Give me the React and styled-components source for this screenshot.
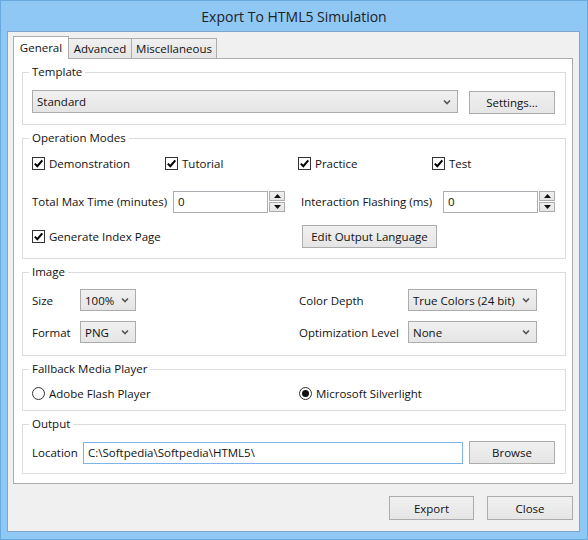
import React from 'react';
import styled, { createGlobalStyle } from 'styled-components';

const Global = createGlobalStyle`
  html, body { margin: 0; padding: 0; background: #8fc7f5; }
  * { box-sizing: border-box; }
`;

const FONT = `"Open Sans", "Liberation Sans", sans-serif`;

const Frame = styled.div`
  width: 588px;
  height: 540px;
  background: #8fc7f5;
  border: 1px solid #6aa9dd;
  display: flex;
  flex-direction: column;
  font-family: ${FONT};
  font-size: 11.5px;
  color: #111;
`;

const TitleBar = styled.div`
  height: 30px;
  display: flex;
  align-items: center;
  justify-content: center;
  font-size: 14px;
  color: #222;
`;

const Client = styled.div`
  margin: 0 7px 7px 6px;
  flex: 1;
  background: #f0f0f0;
  border: 1px solid #7fa5cc;
  padding: 4px 6px 0 5px;
  display: flex;
  flex-direction: column;
`;

const TabStrip = styled.div`
  display: flex;
  align-items: flex-end;
  height: 23px;
  margin-bottom: -1px;
  position: relative;
  z-index: 1;
`;

const Tab = styled.div`
  width: ${(p) => p.$w}px;
  height: ${(p) => (p.$active ? 23 : 21)}px;
  display: flex;
  align-items: center;
  justify-content: center;
  border: 1px solid #acacac;
  border-bottom: ${(p) => (p.$active ? 'none' : '1px solid #acacac')};
  border-left: ${(p) => (p.$first ? '1px solid #acacac' : 'none')};
  background: ${(p) => (p.$active ? '#fff' : 'linear-gradient(#f0f0f0, #e5e5e5)')};
  padding-bottom: ${(p) => (p.$active ? 2 : 0)}px;
`;

const Panel = styled.div`
  background: #fff;
  border: 1px solid #acacac;
  padding: 5px 6px 9px 8px;
  display: flex;
  flex-direction: column;
  gap: 5px;
`;

const Group = styled.fieldset`
  margin: 0;
  min-width: 0;
  border: 1px solid #dcdcdc;
  padding: ${(p) => p.$pt}px 9px ${(p) => p.$pb}px 9px;
  display: flex;
  flex-direction: column;
`;

const Legend = styled.legend`
  padding: 0 3px;
  margin-left: -3px;
  line-height: 16px;
  height: 16px;
`;

const Row = styled.div`
  display: flex;
  align-items: ${(p) => (p.$top ? 'flex-start' : 'center')};
  height: ${(p) => p.$h}px;
  margin-top: ${(p) => p.$mt || 0}px;
`;

const Cell = styled.div`
  width: ${(p) => p.$w}px;
  flex: none;
  display: flex;
  align-items: center;
  white-space: nowrap;
  margin-left: ${(p) => p.$ml || 0}px;
`;

const Combo = styled.div`
  width: ${(p) => p.$w}px;
  height: ${(p) => p.$h || 22}px;
  flex: none;
  border: 1px solid #acacac;
  background: linear-gradient(#f0f0f0, #e5e5e5);
  display: flex;
  align-items: center;
  padding: 0 6px 0 4px;
  margin-left: ${(p) => p.$ml || 0}px;
  span { flex: 1; white-space: nowrap; }
`;

const Chevron = () => (
  <svg width="8" height="6" viewBox="0 0 8 6">
    <path d="M1 1.5 L4 4.5 L7 1.5" fill="none" stroke="#555" strokeWidth="1.6" />
  </svg>
);

const Button = styled.div`
  width: ${(p) => p.$w}px;
  height: ${(p) => p.$h || 23}px;
  flex: none;
  border: 1px solid #acacac;
  background: linear-gradient(#f0f0f0, #e5e5e5);
  display: flex;
  align-items: center;
  justify-content: center;
  white-space: nowrap;
  margin-left: ${(p) => p.$ml || 0}px;
  margin-top: ${(p) => p.$mt || 0}px;
`;

const TextInput = styled.div`
  width: ${(p) => p.$w}px;
  height: ${(p) => p.$h || 22}px;
  flex: none;
  border: 1px solid ${(p) => (p.$focus ? '#7eb4ea' : '#abadb3')};
  background: #fff;
  display: flex;
  align-items: center;
  padding-left: 4px;
  white-space: nowrap;
  margin-left: ${(p) => p.$ml || 0}px;
`;

const SpinBox = styled.div`
  display: flex;
  flex-direction: column;
  gap: 1px;
  margin-left: 1px;
  flex: none;
`;

const SpinBtn = styled.div`
  width: 16px;
  height: 10px;
  border: 1px solid #acacac;
  background: linear-gradient(#f0f0f0, #e5e5e5);
  display: flex;
  align-items: center;
  justify-content: center;
`;

const Spinner = () => (
  <SpinBox>
    <SpinBtn>
      <svg width="7" height="4" viewBox="0 0 7 4"><path d="M0 4 L3.5 0 L7 4 Z" fill="#111" /></svg>
    </SpinBtn>
    <SpinBtn>
      <svg width="7" height="4" viewBox="0 0 7 4"><path d="M0 0 L3.5 4 L7 0 Z" fill="#111" /></svg>
    </SpinBtn>
  </SpinBox>
);

const Box = styled.span`
  width: 13px;
  height: 13px;
  border: 1px solid #333;
  background: #fff;
  display: inline-flex;
  align-items: center;
  justify-content: center;
  margin-right: 4px;
  flex: none;
`;

const Check = ({ label }) => (
  <>
    <Box>
      <svg width="11" height="11" viewBox="0 0 11 11">
        <path d="M1.8 5.6 L4.3 8.2 L9.3 2.3" fill="none" stroke="#000" strokeWidth="2" />
      </svg>
    </Box>
    <span>{label}</span>
  </>
);

const RadioCircle = styled.span`
  width: 13px;
  height: 13px;
  border-radius: 50%;
  border: 1px solid #333;
  background: #fff;
  display: inline-flex;
  align-items: center;
  justify-content: center;
  margin-right: 4px;
  flex: none;
  &::after {
    content: '';
    width: 7px;
    height: 7px;
    border-radius: 50%;
    background: ${(p) => (p.$on ? '#111' : 'transparent')};
  }
`;

const Footer = styled.div`
  display: flex;
  justify-content: flex-end;
  gap: 13px;
  margin-top: 12px;
`;

export default function App() {
  return (
    <>
      <Global />
      <Frame>
        <TitleBar>Export To HTML5 Simulation</TitleBar>
        <Client>
          <TabStrip>
            <Tab $w={56} $active $first>General</Tab>
            <Tab $w={63}>Advanced</Tab>
            <Tab $w={85}>Miscellaneous</Tab>
          </TabStrip>
          <Panel>
            <Group $pt={10} $pb={10}>
              <Legend>Template</Legend>
              <Row $h={24} $top>
                <Combo $w={426} $h={23}><span>Standard</span><Chevron /></Combo>
                <Button $w={86} $ml={11} $mt={1}>Settings...</Button>
              </Row>
            </Group>

            <Group $pt={7} $pb={10}>
              <Legend>Operation Modes</Legend>
              <Row $h={21}>
                <Cell $w={133}><Check label="Demonstration" /></Cell>
                <Cell $w={133}><Check label="Tutorial" /></Cell>
                <Cell $w={134}><Check label="Practice" /></Cell>
                <Cell $w={100}><Check label="Test" /></Cell>
              </Row>
              <Row $h={23} $mt={16}>
                <Cell $w={141}>Total Max Time (minutes)</Cell>
                <TextInput $w={95}>0</TextInput>
                <Spinner />
                <Cell $w={142} $ml={16}>Interaction Flashing (ms)</Cell>
                <TextInput $w={95}>0</TextInput>
                <Spinner />
              </Row>
              <Row $h={23} $mt={12}>
                <Cell $w={270}><Check label="Generate Index Page" /></Cell>
                <Button $w={135}>Edit Output Language</Button>
              </Row>
            </Group>

            <Group $pt={9} $pb={12}>
              <Legend>Image</Legend>
              <Row $h={22}>
                <Cell $w={48}>Size</Cell>
                <Combo $w={56}><span>100%</span><Chevron /></Combo>
                <Cell $w={109} $ml={163}>Color Depth</Cell>
                <Combo $w={129}><span>True Colors (24 bit)</span><Chevron /></Combo>
              </Row>
              <Row $h={22} $mt={10}>
                <Cell $w={48}>Format</Cell>
                <Combo $w={56}><span>PNG</span><Chevron /></Combo>
                <Cell $w={109} $ml={163}>Optimization Level</Cell>
                <Combo $w={129}><span>None</span><Chevron /></Combo>
              </Row>
            </Group>

            <Group $pt={8} $pb={9}>
              <Legend>Fallback Media Player</Legend>
              <Row $h={16}>
                <Cell $w={267}><RadioCircle /><span>Adobe Flash Player</span></Cell>
                <Cell $w={200}><RadioCircle $on /><span>Microsoft Silverlight</span></Cell>
              </Row>
            </Group>

            <Group $pt={9} $pb={9}>
              <Legend>Output</Legend>
              <Row $h={23}>
                <Cell $w={51}>Location</Cell>
                <TextInput $w={380} $focus>C:\Softpedia\Softpedia\HTML5\</TextInput>
                <Button $w={86} $ml={6}>Browse</Button>
              </Row>
            </Group>
          </Panel>
          <Footer>
            <Button $w={85} $h={24}>Export</Button>
            <Button $w={86} $h={24}>Close</Button>
          </Footer>
        </Client>
      </Frame>
    </>
  );
}
